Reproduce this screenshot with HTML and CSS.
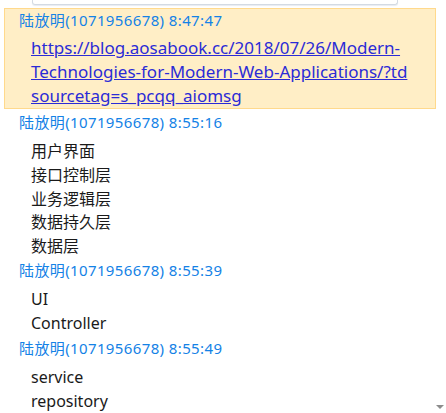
FILE: index.html
```html
<!DOCTYPE html>
<html lang="zh-CN">
<head>
<meta charset="utf-8">
<title>聊天记录</title>
<link rel="stylesheet" href="styles.css">
</head>
<body>
<div class="chat">
  <div class="prev-box"></div>
  <div class="msg msg-highlight">
    <div class="msg-head">陆放明(1071956678) 8:47:47</div>
    <div class="msg-body"><a class="msg-link" href="#">https://blog.aosabook.cc/2018/07/26/Modern-<br>Technologies-for-Modern-Web-Applications/?td<br>sourcetag=s_pcqq_aiomsg</a></div>
  </div>
  <div class="msg">
    <div class="msg-head">陆放明(1071956678) 8:55:16</div>
    <div class="msg-body">
      <div>用户界面</div>
      <div>接口控制层</div>
      <div>业务逻辑层</div>
      <div>数据持久层</div>
      <div>数据层</div>
    </div>
  </div>
  <div class="msg">
    <div class="msg-head">陆放明(1071956678) 8:55:39</div>
    <div class="msg-body">
      <div>UI</div>
      <div>Controller</div>
    </div>
  </div>
  <div class="msg msg-spaced">
    <div class="msg-head">陆放明(1071956678) 8:55:49</div>
    <div class="msg-body">
      <div>service</div>
      <div>repository</div>
    </div>
  </div>
  <div class="scroll-arrow"></div>
</div>
</body>
</html>
```

FILE: styles.css
```css
html, body {
  margin: 0;
  padding: 0;
  background: #ffffff;
}
body {
  font-family: "Noto Sans", "Noto Sans CJK SC", sans-serif;
  color: #1a1a1a;
  overflow: hidden;
  height: 413px;
}
.chat {
  position: relative;
  height: 413px;
}
.prev-box {
  margin-left: 32px;
  width: 364px;
  height: 4px;
  border: 1px solid #d3dae3;
  border-top: none;
  border-radius: 0 0 3px 3px;
  box-shadow: 0 1px 1px #e8ecf1;
}
.msg-head {
  font-size: 15px;
  line-height: 22px;
  letter-spacing: 0.38px;
  color: #1482e6;
  padding-left: 19px;
  white-space: nowrap;
}
.msg-body {
  font-size: 16px;
  line-height: 23.75px;
  padding-left: 31px;
  margin-top: 7px;
}
.msg-spaced {
  margin-top: 2px;
}
.msg-highlight {
  margin: 3px 10px 2px 4px;
  background: #ffeec6;
  border: 1px solid #ffd98c;
}
.msg-highlight .msg-head {
  padding-left: 14px;
}
.msg-highlight .msg-body {
  padding-left: 26px;
  line-height: 24px;
  margin-top: 5px;
}
.msg-link {
  font-size: 17px;
  color: #2b2bd6;
  text-decoration: underline;
  white-space: nowrap;
}
.scroll-arrow {
  position: absolute;
  right: 2px;
  bottom: 4px;
  width: 0;
  height: 0;
  border-left: 4px solid transparent;
  border-right: 4px solid transparent;
  border-top: 4px solid #8c8c8c;
}
```
